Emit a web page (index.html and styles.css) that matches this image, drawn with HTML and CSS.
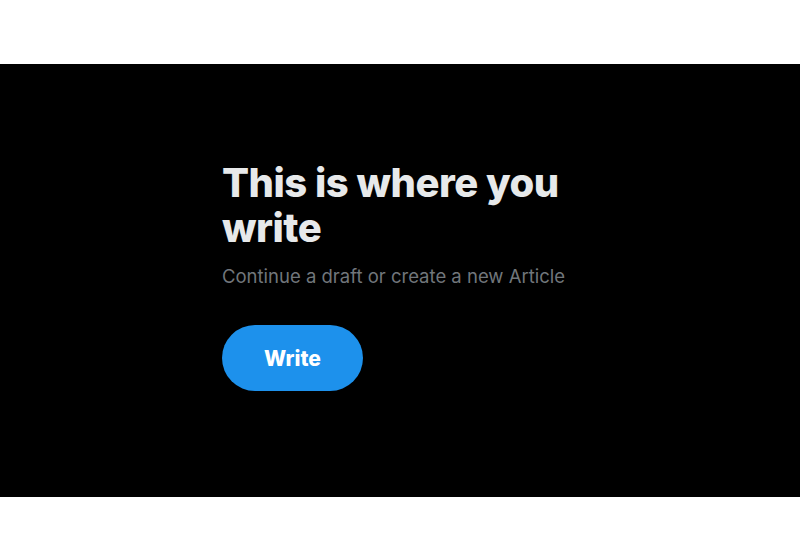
FILE: index.html
```html
<!DOCTYPE html>
<html>
<head>
<meta charset="utf-8">
<link rel="stylesheet" href="styles.css">
</head>
<body>
<div class="band">
  <div class="content">
    <h1 class="title">This is where you write</h1>
    <p class="subtitle">Continue a draft or create a new Article</p>
    <button class="write-btn">Write</button>
  </div>
</div>
</body>
</html>
```
FILE: styles.css
```css
html, body {
  margin: 0;
  padding: 0;
  background: #ffffff;
}
body {
  padding-top: 64px;
  font-family: Inter, "Liberation Sans", sans-serif;
}
.band {
  background: #000000;
  height: 433px;
  box-sizing: border-box;
  padding-top: 96px;
  display: flex;
  justify-content: center;
  align-items: flex-start;
}
.content {
  width: 356px;
  display: flex;
  flex-direction: column;
  align-items: flex-start;
}
.title {
  margin: 0;
  color: #e7e9ea;
  font-size: 40px;
  font-weight: 800;
  line-height: 45px;
  letter-spacing: -0.5px;
}
.subtitle {
  margin: 14px 0 0 0;
  color: #71767b;
  font-size: 18.5px;
  line-height: 24px;
}
.write-btn {
  margin-top: 37px;
  width: 141px;
  height: 66px;
  border: none;
  border-radius: 33px;
  background: #1d91ec;
  color: #ffffff;
  font-family: Inter, "Liberation Sans", sans-serif;
  font-size: 21px;
  font-weight: 800;
  padding: 0;
}
```
